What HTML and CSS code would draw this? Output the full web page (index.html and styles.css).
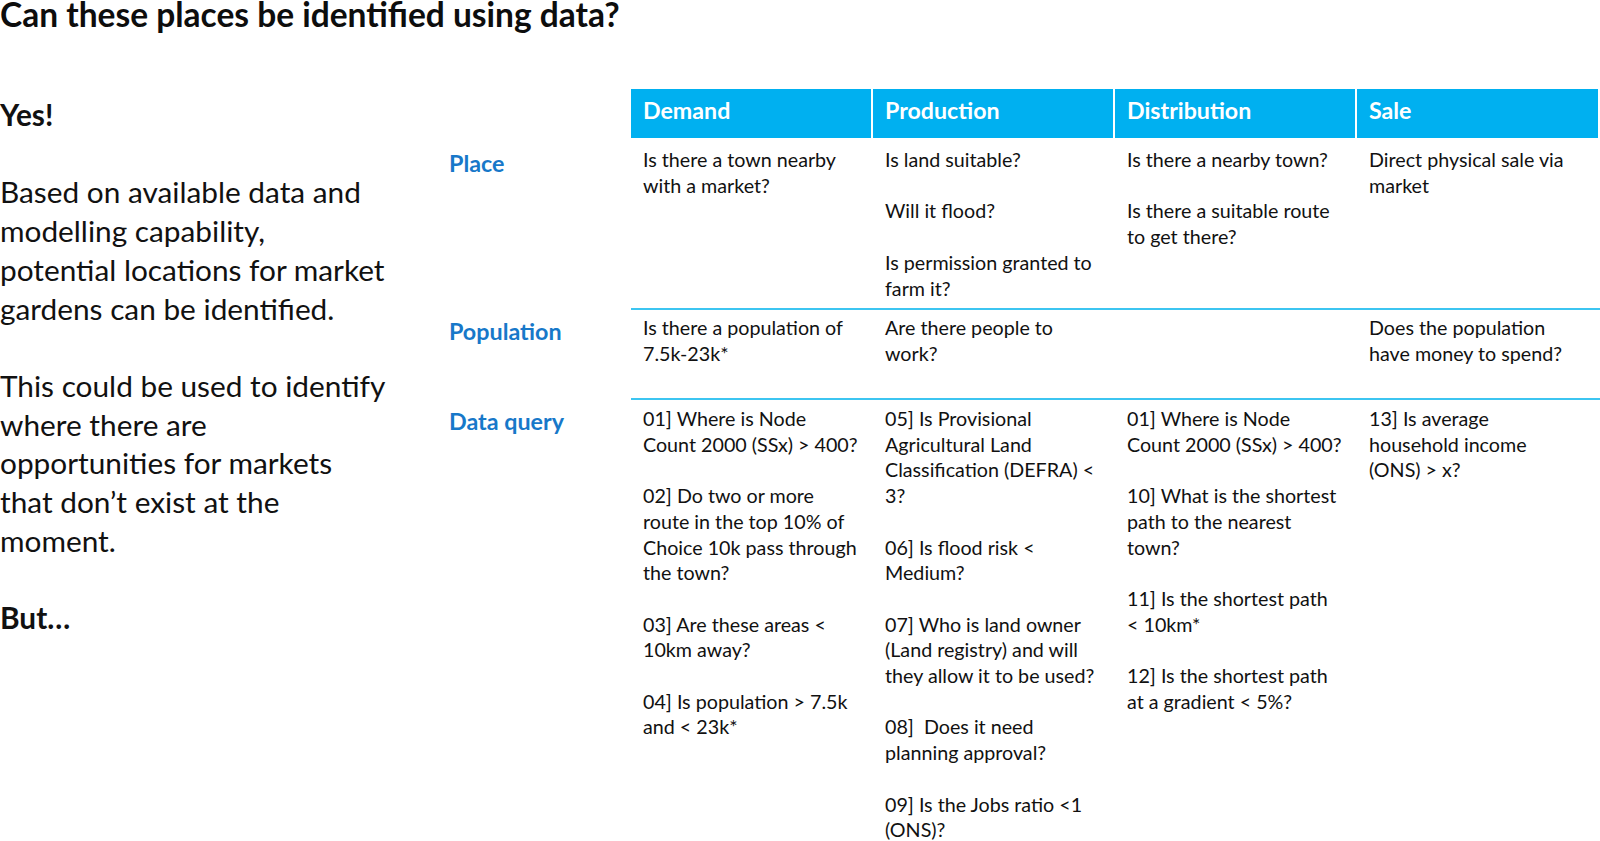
FILE: index.html
```html
<!DOCTYPE html>
<html>
<head>
<meta charset="utf-8">
<link rel="stylesheet" href="styles.css">
</head>
<body>
<h1 class="title">Can these places be identified using data?</h1>
<div class="main">
  <div class="intro">
    <p class="strong">Yes!</p>
    <p class="gap">&nbsp;</p>
    <p>Based on available data and<br>modelling capability,<br>potential locations for market<br>gardens can be identified.</p>
    <p class="gap">&nbsp;</p>
    <p>This could be used to identify<br>where there are<br>opportunities for markets<br>that don’t exist at the<br>moment.</p>
    <p class="gap">&nbsp;</p>
    <p class="strong">But…</p>
  </div>
  <div class="board">
    <div class="corner"></div>
    <div class="head">Demand</div>
    <div class="head">Production</div>
    <div class="head">Distribution</div>
    <div class="head">Sale</div>

    <div class="label r1">Place</div>
    <div class="cell r1">Is there a town nearby<br>with a market?</div>
    <div class="cell r1">Is land suitable?<br><br>Will it flood?<br><br>Is permission granted to<br>farm it?</div>
    <div class="cell r1">Is there a nearby town?<br><br>Is there a suitable route<br>to get there?</div>
    <div class="cell r1">Direct physical sale via<br>market</div>

    <div class="label r2">Population</div>
    <div class="cell r2">Is there a population of<br>7.5k-23k*</div>
    <div class="cell r2">Are there people to<br>work?</div>
    <div class="cell r2"></div>
    <div class="cell r2">Does the population<br>have money to spend?</div>

    <div class="label r3">Data query</div>
    <div class="cell r3">01] Where is Node<br>Count 2000 (SSx) &gt; 400?<br><br>02] Do two or more<br>route in the top 10% of<br>Choice 10k pass through<br>the town?<br><br>03] Are these areas &lt;<br>10km away?<br><br>04] Is population &gt; 7.5k<br>and &lt; 23k*</div>
    <div class="cell r3">05] Is Provisional<br>Agricultural Land<br>Classification (DEFRA) &lt;<br>3?<br><br>06] Is flood risk &lt;<br>Medium?<br><br>07] Who is land owner<br>(Land registry) and will<br>they allow it to be used?<br><br>08]&nbsp; Does it need<br>planning approval?<br><br>09] Is the Jobs ratio &lt;1<br>(ONS)?</div>
    <div class="cell r3">01] Where is Node<br>Count 2000 (SSx) &gt; 400?<br><br>10] What is the shortest<br>path to the nearest<br>town?<br><br>11] Is the shortest path<br>&lt; 10km*<br><br>12] Is the shortest path<br>at a gradient &lt; 5%?</div>
    <div class="cell r3">13] Is average<br>household income<br>(ONS) &gt; x?</div>
  </div>
</div>
</body>
</html>
```
FILE: styles.css
```css
html, body {
  margin: 0;
  padding: 0;
  background: #ffffff;
  overflow: hidden;
}
body {
  font-family: Lato, "Open Sans", sans-serif;
  color: #111111;
  width: 1600px;
  height: 841px;
}
.title {
  margin: 0;
  font-size: 33.5px;
  line-height: 29px;
  font-weight: 700;
  color: #0d0d0d;
  white-space: nowrap;
}
.main {
  display: flex;
  margin-top: 60px;
}
.intro {
  width: 449px;
  flex: none;
  padding-top: 7px;
  font-size: 29.8px;
  line-height: 38.7px;
}
.intro p {
  margin: 0;
  white-space: nowrap;
}
.intro .strong {
  font-weight: 700;
}
.board {
  flex: none;
  display: grid;
  grid-template-columns: 182px 242px 242px 242px 243px;
  grid-template-rows: 49px 170px 90px auto;
}
.corner {
  background: transparent;
}
.head {
  background: #00b0f0;
  color: #ffffff;
  font-weight: 700;
  font-size: 23.2px;
  line-height: 43px;
  padding: 0 12px 6px;
  border-right: 2px solid #ffffff;
  box-sizing: border-box;
}
.head:last-child {
  border-right: none;
}
.label {
  color: #1778c9;
  font-weight: 700;
  font-size: 23.3px;
  line-height: 25.7px;
  padding-top: 11px;
}
.label.r1 {
  padding-top: 13px;
}
.cell {
  font-size: 19.7px;
  line-height: 25.7px;
  padding: 8px 12px;
  white-space: nowrap;
  border-top: 2px solid #3cc5f1;
}
.cell.r1 {
  border-top: none;
  padding-top: 9px;
}
.cell.r2 {
  padding-top: 5px;
}
.cell.r3 {
  padding-top: 6px;
}
```
